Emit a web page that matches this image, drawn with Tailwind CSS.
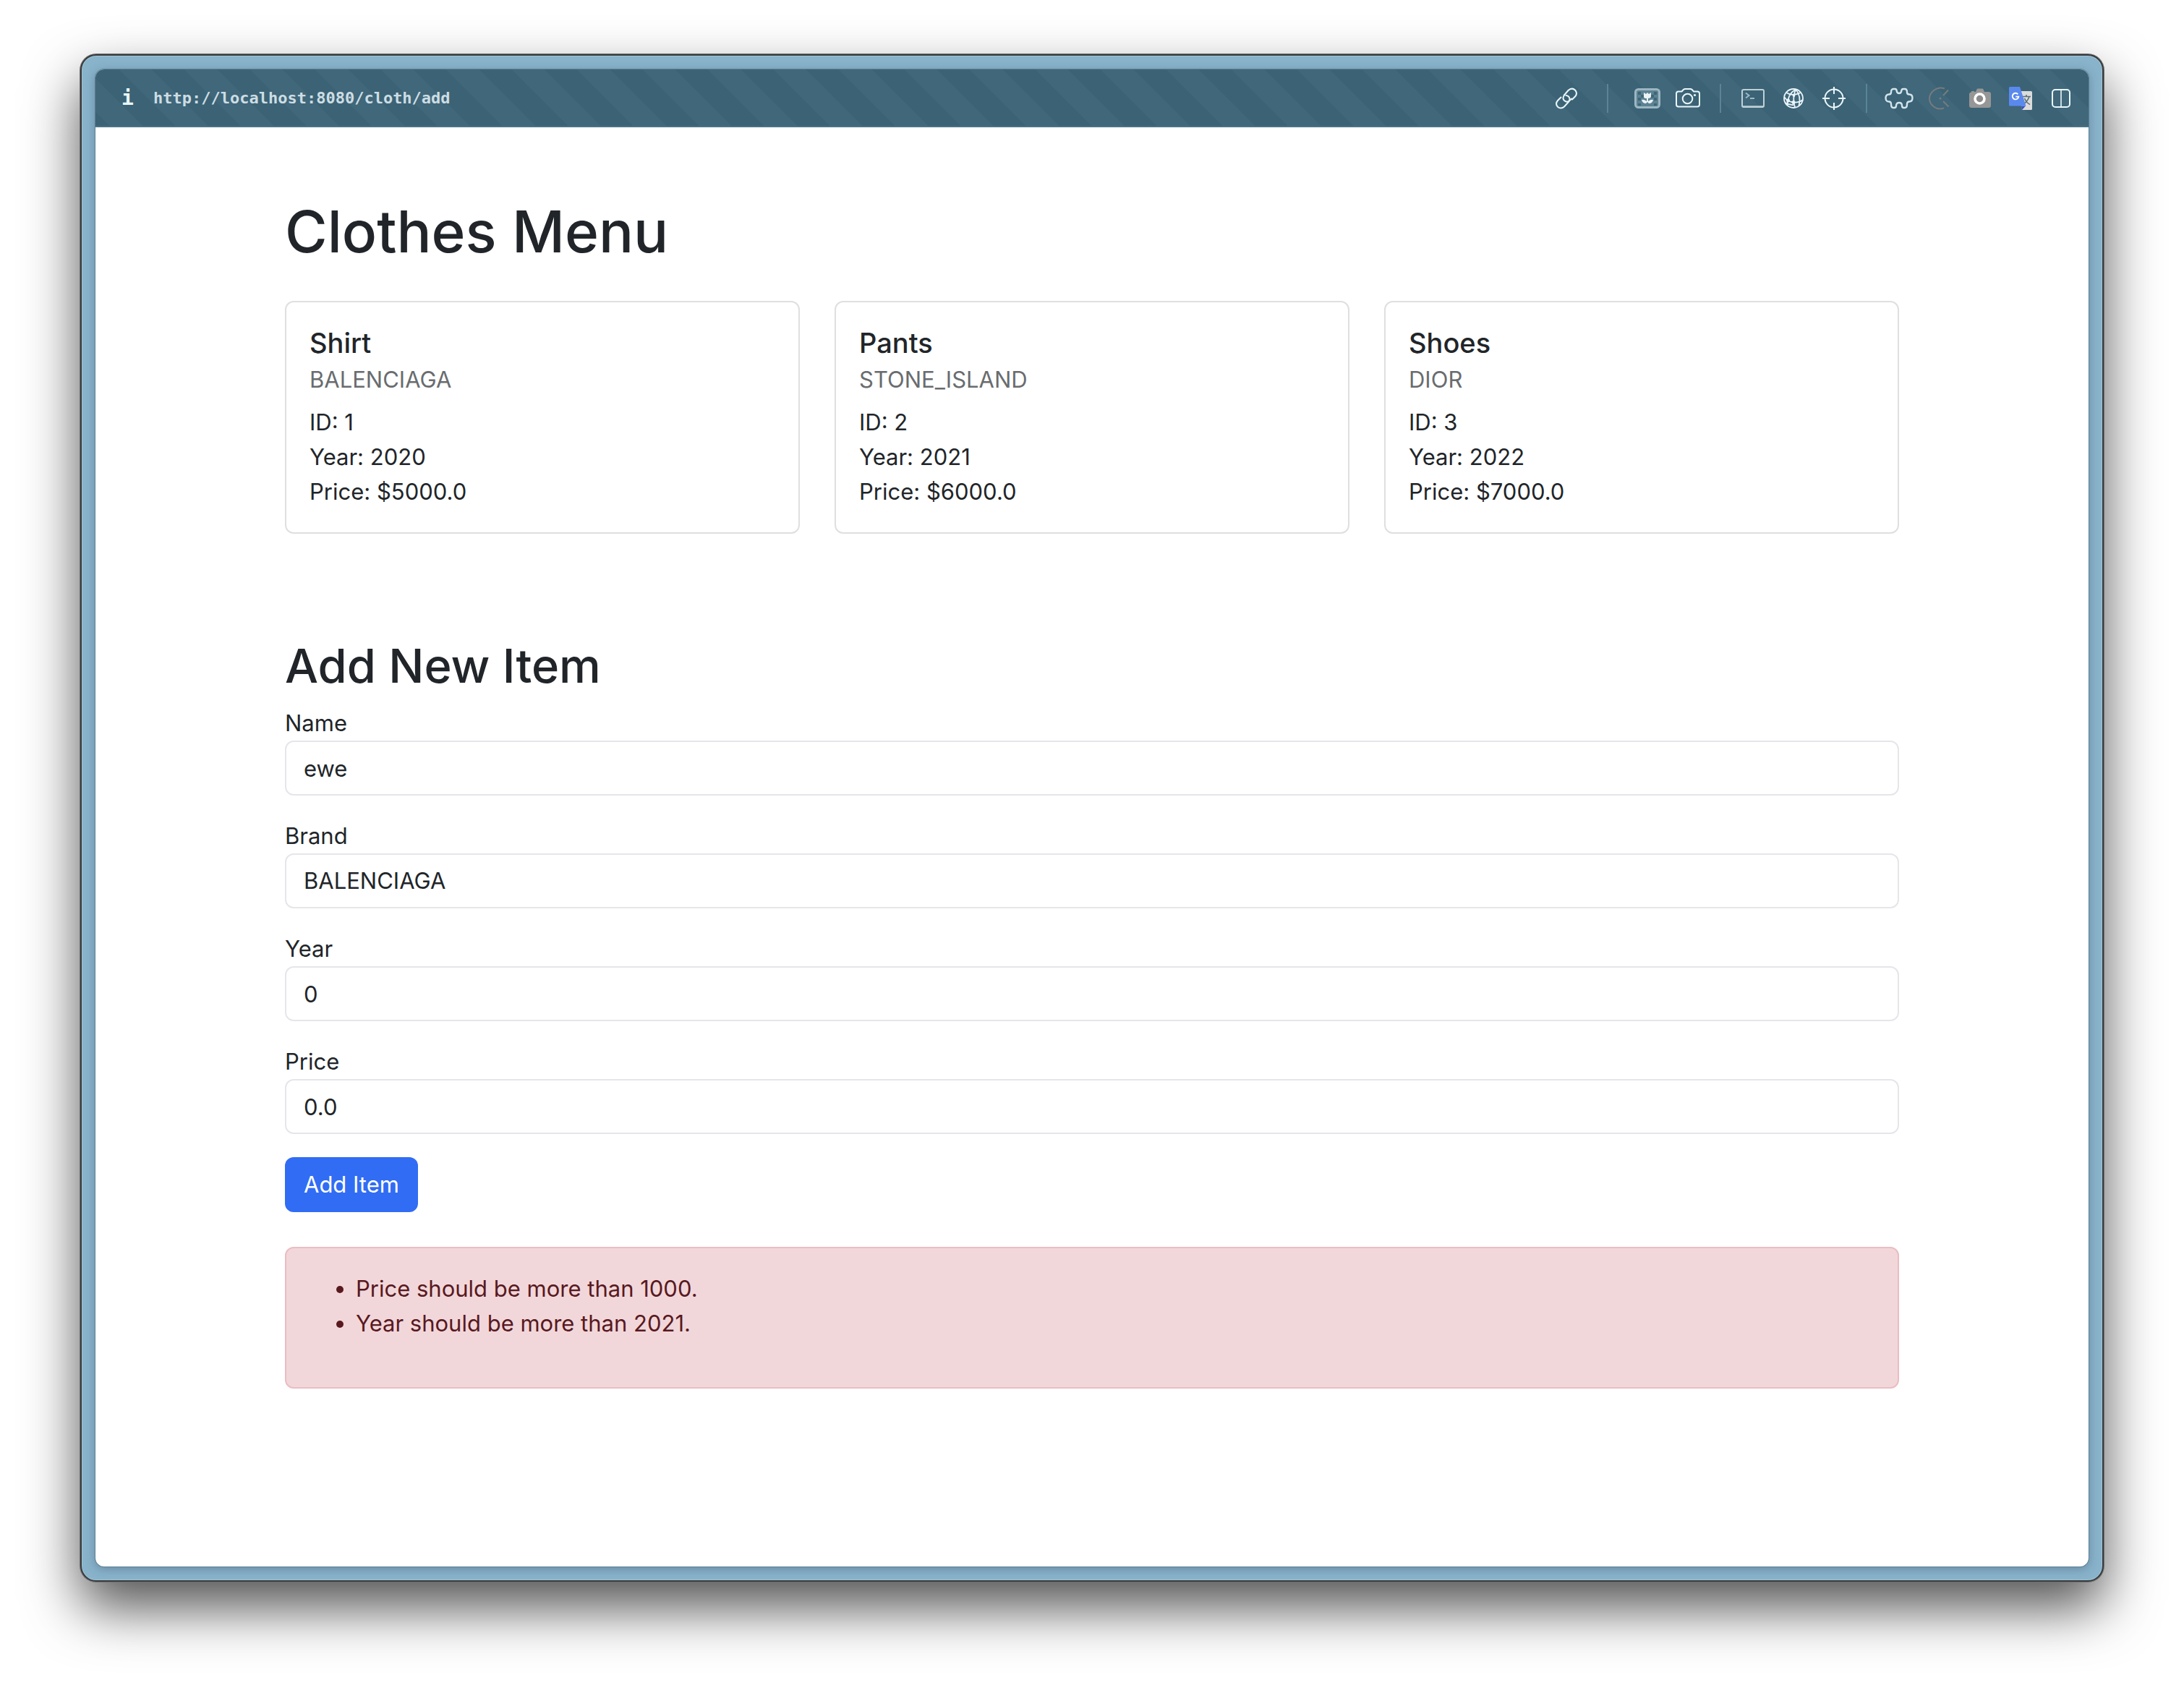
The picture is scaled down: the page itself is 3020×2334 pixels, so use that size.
<!DOCTYPE html>
<html lang="en">
<head>
<meta charset="utf-8">
<meta name="viewport" content="width=device-width, initial-scale=1">
<title>Clothes Menu</title>
<script src="https://cdn.jsdelivr.net/npm/@tailwindcss/browser@4"></script>
</head>
<body class="flex min-h-screen flex-col bg-white px-[111px] pt-[75px] pb-[147px] font-['Inter',sans-serif] text-[31px] leading-[48px] text-[#212529]">

<div class="flex flex-1 flex-col rounded-[22px] border-2 border-[#3a3b3c] bg-[#88b3ca] p-[19px] shadow-[inset_0_0_0_1px_#9cc4d8,0_0_0_1px_#707070,0_36px_76px_rgba(0,0,0,0.68)]">
<div class="flex flex-1 flex-col overflow-hidden rounded-xl bg-white shadow-[0_0_0_1px_#5c8092,0_3px_14px_rgba(50,70,100,0.4)]">

  <!-- Browser toolbar -->
  <header class="flex h-20 items-center border-b-2 border-[#4b7284] bg-[repeating-linear-gradient(45deg,#3b6375_0px,#3b6375_14px,#40677a_14px,#40677a_46px,#3b6375_46px,#3b6375_64px)] pt-0.5 pr-[18px] pl-9 text-[#eaf6fb]">
    <button type="button" aria-label="Site information" class="w-4 font-['DejaVu_Sans_Mono',monospace] text-[28px] leading-8 font-bold">i</button>
    <a href="#" class="ml-7 font-['DejaVu_Sans_Mono',monospace] text-[22px] leading-8 font-bold text-[#cddde4]">http://localhost:8080/cloth/add</a>

    <div class="ml-auto flex items-center gap-6">
      <button type="button" aria-label="Copy link" class="mr-3 flex h-10 w-10 items-center justify-center">
        <svg class="h-8 w-8" viewBox="0 0 32 32" fill="none" stroke="currentColor" stroke-width="2" stroke-linecap="round">
          <path d="M13 11.5 L18.5 5 Q23.5 0.5 28 4.5 Q32 9 28 13.500 L24 17.500"/>
          <path d="M13 11.500 Q10 16 13 19 Q17 22.500 20.500 19 L23 16.500" />
          <path d="M8.500 14.500 L4 19 Q0 23.500 4 27.800 Q8.500 31.500 13 27.500 L19 21 Q22 16.500 19 13.500 Q17.500 12 15.500 12"/>
        </svg>
      </button>
      <span class="h-10 w-0.5 bg-[#5b8497]"></span>
      <div class="ml-2.5 flex gap-4">
        <button type="button" aria-label="Gallery" class="flex h-10 w-10 items-center justify-center">
          <svg class="h-7 w-9" viewBox="0 0 36 28">
            <rect x="1.500" y="1.500" width="33" height="25" rx="4" fill="#5c8292" stroke="#9db6c1" stroke-width="3"/>
            <path d="M5 5h4v4H5zM27 5h4v4h-4zM9 9h4v4H9zM23 9h4v4h-4zM5 13h4v4H5zM27 13h4v4h-4zM5 21h4v3H5zM27 21h4v3h-4z" fill="#3f6678"/>
            <path d="M13 6 L16 8 L18 6 L20 8 L23 6 V12 Q22 14 19 14 V18 Q23 15 26 16 Q25 21 20 21 L18 19 L16 21 Q11 21 10 16 Q13 15 17 18 V14 Q13 14 13 12 Z" fill="#eaf3f6"/>
          </svg>
        </button>
        <button type="button" aria-label="Screenshot" class="flex h-10 w-10 items-center justify-center">
          <svg class="h-7 w-[34px]" viewBox="0 0 34 28" fill="none" stroke="currentColor" stroke-width="2">
            <path d="M4 4.500 H8.500 L11 1.800 Q12 1 13 1 H20.500 Q21.500 1 22.500 1.800 L25 4.500 H30 Q33 4.500 33 7.500 V22.500 Q33 25.500 30 25.500 H4 Q1 25.500 1 22.500 V7.500 Q1 4.500 4 4.500 Z"/>
            <circle cx="16.500" cy="14.500" r="6.800"/><circle cx="26.500" cy="9.500" r="1.600" fill="currentColor" stroke="none"/>
          </svg>
        </button>
      </div>
      <span class="h-10 w-0.5 bg-[#5b8497]"></span>
      <div class="flex gap-4">
        <button type="button" aria-label="Console" class="flex h-10 w-10 items-center justify-center">
          <svg class="h-7 w-8" viewBox="0 0 32 28" fill="none" stroke="#bfd0d7" stroke-width="2">
            <rect x="1" y="2" width="30" height="24" rx="2"/><path d="M2 25.500 H30" stroke-width="2.500"/>
            <path d="M6 6.500 L10.500 10 L6 13.500 M12 14 H18" stroke="#9fb8c3"/>
          </svg>
        </button>
        <button type="button" aria-label="Network" class="flex h-10 w-10 items-center justify-center">
          <svg class="h-7 w-7" viewBox="0 0 28 28" fill="none" stroke="currentColor" stroke-width="1.800">
            <circle cx="14" cy="14" r="13"/>
            <path d="M17 1.500 Q6 8 5.500 23 M17 1.500 Q12 14 16 26.500 M17 1.500 Q25 11 21.500 24 M4 6 Q13 12 24 6 M1.500 12 Q4 18 14 19.500 Q22 20 27 16 M3 20 Q8 23.500 14 23"/>
            <circle cx="6.500" cy="17" r="1.600" fill="currentColor"/><circle cx="14" cy="19.500" r="1.600" fill="currentColor"/><circle cx="14.500" cy="10" r="1" fill="currentColor"/>
          </svg>
        </button>
        <button type="button" aria-label="Inspect" class="flex h-10 w-10 items-center justify-center">
          <svg class="h-[34px] w-[34px]" viewBox="0 0 34 34" fill="none" stroke="currentColor" stroke-width="2">
            <circle cx="17" cy="17" r="12.500"/><path d="M17 1 V11 M17 23 V33 M1 17 H11 M23 17 H33"/>
          </svg>
        </button>
      </div>
      <span class="h-10 w-0.5 bg-[#5b8497]"></span>
      <div class="flex gap-4">
        <button type="button" aria-label="Extensions" class="flex h-10 w-10 items-center justify-center">
          <svg class="h-[30px] w-10" viewBox="0 0 40 30" fill="none" stroke="#d3e4ec" stroke-width="2.400" stroke-linejoin="round">
            <path d="M9 6.500 Q9 2 12 2 H14.500 Q16.500 2 16.800 5 Q17.300 8 20 8 Q22.700 8 23.200 5 Q23.500 2 25.500 2 H28 Q31 2 31 6.500 Q31 9.500 34 9.500 Q38.500 9.500 38.500 14.500 Q38.500 19.500 34 19.500 Q31 19.500 31 23 Q31 28 28 28 H26.500 Q24 28 24 25 Q24 21 20 21 Q16 21 16 25 Q16 28 13.500 28 H12 Q9 28 9 23 Q9 19.500 6 19.500 Q1.500 19.500 1.500 14.500 Q1.500 9.500 6 9.500 Q9 9.500 9 6.500 Z"/>
          </svg>
        </button>
        <button type="button" aria-label="Blocker" class="flex h-10 w-10 items-center justify-center">
          <svg class="h-8 w-8" viewBox="0 0 32 32" fill="none" stroke="#777b7e" stroke-width="2">
            <path d="M23 2.500 Q15 -0.500 8 5 Q2 10 2 16 Q2 23 8 27.500 Q14 32 22 29.500"/>
            <path d="M28 4.500 L21 12 M21 20 L28.500 27.500"/><circle cx="17" cy="16" r="1.600" fill="#777b7e" stroke="none"/>
          </svg>
        </button>
        <button type="button" aria-label="Capture" class="flex h-10 w-10 items-center justify-center">
          <svg class="h-7 w-[30px]" viewBox="0 0 30 28">
            <path d="M3 5.500 V4 H7 V5 H9 L10.500 1.500 Q11 0.500 12 0.500 H18 Q19 0.500 19.500 1.500 L21 5 H27 Q30 5 30 8 V24 Q30 27 27 27 H3 Q0 27 0 24 V8 Q0 6 3 5.500Z" fill="#969696"/>
            <circle cx="14.500" cy="14.500" r="6.500" fill="#8b8b8b" stroke="#fff" stroke-width="3.600"/>
          </svg>
        </button>
        <button type="button" aria-label="Translate" class="flex h-10 w-10 items-center justify-center">
          <svg class="h-8 w-8" viewBox="0 0 32 32">
            <path d="M14 6 H30.500 Q32 6 32 7.500 V30.500 Q32 32 30.500 32 H18 Z" fill="#dcdcdc"/>
            <path d="M19 13.500 H30 M24 11 V13.500 M28 13.500 Q26 20 19.500 24.500 M21.500 16 Q24 22 29 24.500" fill="none" stroke="#5b7078" stroke-width="1.600"/>
            <path d="M17 26.500 H23 L18 32 Z" fill="#3a4fc0"/>
            <path d="M1.500 0 H15 L23.500 26.500 H1.500 Q0 26.500 0 25 V1.500 Q0 0 1.500 0 Z" fill="#5a89ee"/>
            <path d="M12.300 10.300 A4.300 4.300 0 1 0 13.300 13.600 H9.300" fill="none" stroke="#fff" stroke-width="1.900"/>
          </svg>
        </button>
        <button type="button" aria-label="Split view" class="flex h-10 w-10 items-center justify-center">
          <svg class="h-[26px] w-[26px]" viewBox="0 0 26 26" fill="none" stroke="currentColor" stroke-width="2">
            <rect x="1" y="1" width="24" height="24" rx="4"/><path d="M13 1 V25" stroke-width="1.600"/>
          </svg>
        </button>
      </div>
    </div>
  </header>

  <main class="mx-auto w-full max-w-[2280px] px-6 pt-24">
    <h1 class="mb-12 text-[80px] leading-[96px] font-medium">Clothes Menu</h1>

    <section aria-label="Clothes" class="grid grid-cols-3 gap-12">
      <article class="rounded-xl border-2 border-[#dfdfdf] p-8">
        <h2 class="mb-2 text-[38px] leading-[48px] font-medium">Shirt</h2>
        <h3 class="mb-4 leading-[38px] text-[#696c6f]">BALENCIAGA</h3>
        <p>ID: 1<br>Year: 2020<br>Price: $5000.0</p>
      </article>
      <article class="rounded-xl border-2 border-[#dfdfdf] p-8">
        <h2 class="mb-2 text-[38px] leading-[48px] font-medium">Pants</h2>
        <h3 class="mb-4 leading-[38px] text-[#696c6f]">STONE_ISLAND</h3>
        <p>ID: 2<br>Year: 2021<br>Price: $6000.0</p>
      </article>
      <article class="rounded-xl border-2 border-[#dfdfdf] p-8">
        <h2 class="mb-2 text-[38px] leading-[48px] font-medium">Shoes</h2>
        <h3 class="mb-4 leading-[38px] text-[#696c6f]">DIOR</h3>
        <p>ID: 3<br>Year: 2022<br>Price: $7000.0</p>
      </article>
    </section>

    <h2 class="mt-36 mb-4 text-[65px] leading-[78px] font-medium">Add New Item</h2>

    <form class="flex flex-col gap-8">
      <div class="flex flex-col">
        <label for="name">Name</label>
        <input id="name" type="text" value="ewe" class="h-[76px] w-full rounded-xl border-2 border-[#e4e6ea] px-6">
      </div>
      <div class="flex flex-col">
        <label for="brand">Brand</label>
        <select id="brand" class="h-[76px] w-full appearance-none rounded-xl border-2 border-[#e4e6ea] bg-white px-6">
          <option selected>BALENCIAGA</option>
          <option>STONE_ISLAND</option>
          <option>DIOR</option>
        </select>
      </div>
      <div class="flex flex-col">
        <label for="year">Year</label>
        <input id="year" type="text" inputmode="numeric" value="0" class="h-[76px] w-full rounded-xl border-2 border-[#e4e6ea] px-6">
      </div>
      <div class="flex flex-col">
        <label for="price">Price</label>
        <input id="price" type="text" inputmode="decimal" value="0.0" class="h-[76px] w-full rounded-xl border-2 border-[#e4e6ea] px-6">
      </div>
      <button type="submit" class="h-[76px] self-start rounded-xl bg-[#316cf4] px-[26px] text-white">Add Item</button>
    </form>

    <div role="alert" class="mt-12 mb-12 rounded-xl border-2 border-[#eabdc2] bg-[#f2d7da] p-8 text-[#58191f]">
      <ul class="mb-8 list-disc pl-16">
        <li>Price should be more than 1000.</li>
        <li>Year should be more than 2021.</li>
      </ul>
    </div>
  </main>
</div>
</div>
</body>
</html>
